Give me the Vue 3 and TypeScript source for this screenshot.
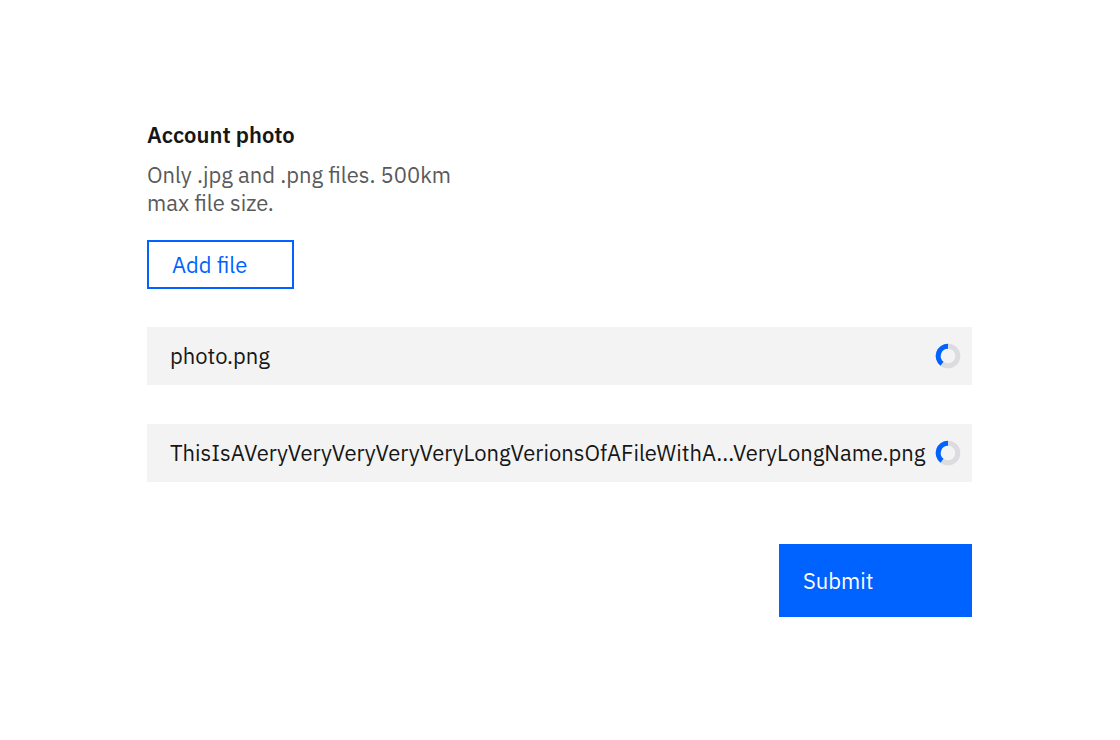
<script setup lang="ts">
interface UploadFile {
  id: number
  name: string
}

const files: UploadFile[] = [
  { id: 1, name: 'photo.png' },
  { id: 2, name: 'ThisIsAVeryVeryVeryVeryVeryLongVerionsOfAFileWithA...VeryLongName.png' },
]
</script>

<template>
  <form class="uploader" @submit.prevent>
    <h1 id="upload-title" class="title">Account photo</h1>
    <p id="upload-help" class="help">Only .jpg and .png files. 500km max file size.</p>
    <button class="add" type="button" aria-describedby="upload-title upload-help">Add file</button>
    <ul class="files">
      <li v-for="file in files" :key="file.id" class="file">
        <span class="name">{{ file.name }}</span>
        <svg class="loader" viewBox="0 0 26 26" role="img" aria-label="Uploading">
          <circle class="track" cx="13" cy="13" r="9.8" />
          <path class="arc" d="M13 3.2 A9.8 9.8 0 0 0 7 20.75" />
        </svg>
      </li>
    </ul>
    <button class="submit" type="submit">Submit</button>
  </form>
</template>

<style>
body {
  margin: 0;
  background: #fff;
}
</style>

<style scoped>
.uploader {
  box-sizing: border-box;
  display: flex;
  flex-direction: column;
  align-items: flex-start;
  padding: 121px 148px 120px 147px;
  color: #161616;
  font-family: "IBM Plex Sans", "Noto Sans", "Liberation Sans", sans-serif;
  font-size: 22px;
  line-height: 28px;
}
.title {
  margin: 0;
  font-size: 22px;
  font-weight: 600;
}
.help {
  margin: 12px 0 23px;
  max-width: 320px;
  color: #5a5a5a;
}
.add {
  box-sizing: border-box;
  width: 147px;
  height: 49px;
  padding: 0 23px;
  border: 2px solid #0062ff;
  background: #fff;
  color: #0062ff;
  font: inherit;
  text-align: left;
}
.files {
  display: flex;
  flex-direction: column;
  align-self: stretch;
  gap: 39px;
  margin: 38px 0 62px;
  padding: 0;
  list-style: none;
}
.file {
  display: flex;
  align-items: center;
  justify-content: space-between;
  height: 58px;
  padding: 0 11px 0 23px;
  background: #f3f3f3;
}
.name {
  white-space: nowrap;
}
.loader {
  flex: none;
  width: 26px;
  height: 26px;
  fill: none;
  stroke-width: 5;
}
.track {
  stroke: #dcdce0;
}
.arc {
  stroke: #0062ff;
}
.submit {
  align-self: flex-end;
  width: 193px;
  height: 73px;
  padding: 0 24px;
  border: 0;
  background: #0062ff;
  color: #fff;
  font: inherit;
  text-align: left;
}
</style>
